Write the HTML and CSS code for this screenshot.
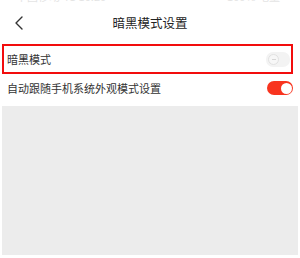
FILE: index.html
```html
<!DOCTYPE html>
<html lang="zh">
<head>
<meta charset="utf-8">
<link rel="stylesheet" href="styles.css">
</head>
<body>
<div class="page">
  <div class="status"><span>中国移动 4G 10:20</span><span>100% 电量</span></div>
  <header class="header">
    <svg class="back" width="10" height="14" viewBox="0 0 10 14"><polyline points="8,1 2,7 8,13" fill="none" stroke="#333" stroke-width="1.4" stroke-linejoin="round" stroke-linecap="round"/></svg>
    <div class="title">暗黑模式设置</div>
    <div></div>
  </header>
  <div class="row row-hl">
    <span class="label">暗黑模式</span>
    <span class="toggle off"><span class="knob"><span class="dash"></span></span></span>
  </div>
  <div class="row">
    <span class="label">自动跟随手机系统外观模式设置</span>
    <span class="toggle on"><span class="knob"></span></span>
  </div>
  <div class="blank"></div>
</div>
</body>
</html>
```
FILE: styles.css
```css
* { box-sizing: border-box; }
html, body { margin: 0; padding: 0; background: #fff; }
body { font-family: "Noto Sans CJK SC", "Noto Sans", sans-serif; color: #333; width: 300px; height: 258px; overflow: hidden; }
.page { display: flex; flex-direction: column; }
.status { height: 4px; overflow: hidden; display: flex; justify-content: space-between; padding: 0 20px 0 16px; font-size: 11px; line-height: 4px; color: #e4e4e4; }
.status span { display: block; transform: translateY(-6px); }
.header { height: 40px; display: grid; grid-template-columns: 1fr auto 1fr; align-items: center; }
.back { margin-left: 14px; margin-top: -3px; }
.title { font-size: 12.5px; color: #222; margin-top: -4px; }
.row { display: flex; align-items: center; justify-content: space-between; font-size: 11px; }
.row-hl { height: 30px; margin: 0 7px 0 2px; border: 2.5px solid #f20d0d; padding: 0 1px 0 3px; }
.row:not(.row-hl) { height: 28px; padding: 0 7px 0 7px; }
.label { line-height: 1; }
.toggle { width: 26px; height: 14px; border-radius: 7px; position: relative; display: block; }
.toggle.on { background: #f8341f; }
.toggle.on .knob { position: absolute; right: 1.5px; top: 1.5px; width: 11px; height: 11px; border-radius: 50%; background: #fff; }
.toggle.off { background: #f3f3f3; width: 24px; height: 15px; margin-right: 0; }
.toggle.off .knob { position: absolute; left: 2px; top: 2px; width: 11px; height: 11px; border-radius: 50%; border: 1px solid #e2e2e2; background: #f7f7f7; }
.toggle.off .dash { position: absolute; left: 2.5px; top: 4px; width: 4px; height: 1px; background: #d6d6d6; }
.blank { margin: 4px 2px 0 2px; height: 149px; background: #ececec; }
```
